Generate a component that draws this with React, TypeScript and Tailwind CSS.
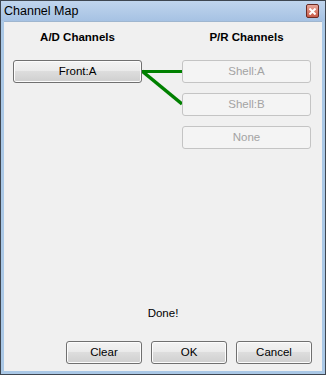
import React from "react";

const font = { fontFamily: '"Liberation Sans", Arial, sans-serif' };

interface BtnProps {
  label: string;
  disabled?: boolean;
  className?: string;
}

const WinButton = ({ label, disabled, className = "" }: BtnProps) =>
  disabled ? (
    <div
      className={`h-[23px] flex items-center justify-center rounded-[3px] border border-[#c4c4c4] bg-[#f4f4f4] text-[11.5px] text-[#a3a3a3] ${className}`}
    >
      {label}
    </div>
  ) : (
    <div
      className={`h-[23px] flex items-center justify-center rounded-[3px] border border-[#707070] bg-[linear-gradient(#f3f3f3_0%,#ebebeb_45%,#dddddd_50%,#cfcfcf_100%)] text-[11.5px] text-black shadow-[inset_0_0_0_1px_#fcfcfc] ${className}`}
    >
      {label}
    </div>
  );

function CloseBox() {
  return (
    <div className="w-[13px] h-[14px] rounded-[2px] border border-[#6b2a22] bg-[linear-gradient(#e8a699,#c75a48)] flex items-center justify-center">
      <svg width="7" height="7" viewBox="0 0 7 7">
        <path d="M0.5 0.5 L6.5 6.5 M6.5 0.5 L0.5 6.5" stroke="#fff" strokeWidth="2" />
      </svg>
    </div>
  );
}

export default function App() {
  return (
    <div
      className="w-[326px] h-[375px] flex flex-col border border-[#3e4650] bg-[#aac8e6] px-[3px] pb-[3px]"
      style={font}
    >
      {/* Title bar */}
      <div className="h-[20px] flex items-center justify-between bg-[linear-gradient(#c0d5ed,#a6c2e3)] -mx-[3px] px-[3px]">
        <span className="text-[12.5px] text-black leading-none">Channel Map</span>
        <div className="mr-[3px]">
          <CloseBox />
        </div>
      </div>

      {/* Client area */}
      <div className="flex-1 flex flex-col bg-[#f0f0f0] border-t border-[#9fb6cf]">
        <div className="flex pl-[9px] pr-[10px] pt-[8px]">
          <div className="w-[129px] flex flex-col">
            <div className="h-[14px] text-center text-[11.5px] font-bold text-black leading-[14px]">
              A/D Channels
            </div>
            <WinButton label="Front:A" className="mt-[16px]" />
          </div>

          <div className="w-[40px] pt-[30px]">
            <svg width="40" height="50" viewBox="0 0 40 50">
              <path d="M0 11.5 H40" stroke="#008000" strokeWidth="3" fill="none" />
              <path d="M0 11 L40 44" stroke="#008000" strokeWidth="3.5" fill="none" />
            </svg>
          </div>

          <div className="w-[129px] flex flex-col">
            <div className="h-[14px] text-center text-[11.5px] font-bold text-black leading-[14px]">
              P/R Channels
            </div>
            <div className="mt-[16px] flex flex-col gap-[10px]">
              <WinButton label="Shell:A" disabled />
              <WinButton label="Shell:B" disabled />
              <WinButton label="None" disabled />
            </div>
          </div>
        </div>

        <div className="flex-1" />

        <div className="text-center text-[11.5px] text-black leading-[13px]">Done!</div>

        <div className="flex justify-end gap-[9px] pr-[10px] mt-[21px] mb-[7px]">
          <WinButton label="Clear" className="w-[76px]" />
          <WinButton label="OK" className="w-[76px]" />
          <WinButton label="Cancel" className="w-[76px]" />
        </div>
      </div>
    </div>
  );
}
